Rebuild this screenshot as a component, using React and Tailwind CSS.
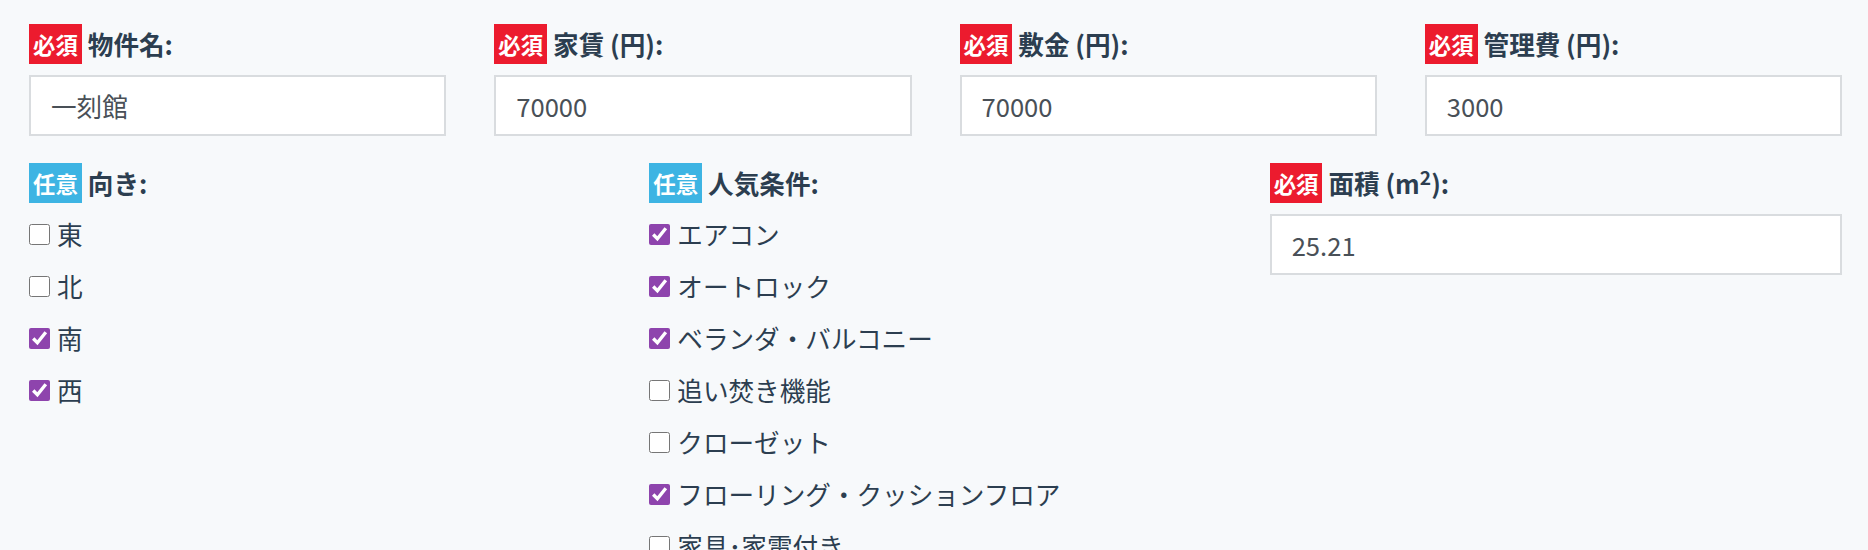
import { useState } from "react";

const Badge = ({ required }) => (
  <span
    className={
      "inline-flex h-[40px] items-center px-[4px] text-[22.4px] font-bold leading-none text-white " +
      (required ? "bg-[#ec1b2e]" : "bg-[#3db4e3]")
    }
  >
    {required ? "必須" : "任意"}
  </span>
);

const FieldLabel = ({ required, children }) => (
  <div className="flex items-center gap-[6px]">
    <Badge required={required} />
    <span className="text-[25.6px] font-bold leading-none text-[#2c3e50]">{children}</span>
  </div>
);

const TextField = ({ label, value, required = true }) => (
  <div>
    <FieldLabel required={required}>{label}</FieldLabel>
    <input
      type="text"
      defaultValue={value}
      className="mt-[11px] h-[61px] w-full border-2 border-[#d9dcdf] bg-white px-[20px] text-[25.6px] text-[#495057] outline-none"
    />
  </div>
);

const CheckList = ({ items }) => {
  const [checked, setChecked] = useState(items.map((i) => i.on));

  const toggle = (idx) => {
    setChecked(checked.map((c, i) => (i === idx ? !c : c)));
  };

  return (
    <div className="mt-[5px]">
      {items.map((item, idx) => (
        <label key={item.name} className="flex h-[52px] items-center gap-[7px]">
          <input
            type="checkbox"
            checked={checked[idx]}
            onChange={() => toggle(idx)}
            className="m-0 h-[21px] w-[21px] accent-[#8e44ad]"
          />
          <span className="text-[25.6px] leading-none text-[#2c3e50]">{item.name}</span>
        </label>
      ))}
    </div>
  );
};

const directions = [
  { name: "東", on: false },
  { name: "北", on: false },
  { name: "南", on: true },
  { name: "西", on: true },
];

const features = [
  { name: "エアコン", on: true },
  { name: "オートロック", on: true },
  { name: "ベランダ・バルコニー", on: true },
  { name: "追い焚き機能", on: false },
  { name: "クローゼット", on: false },
  { name: "フローリング・クッションフロア", on: true },
  { name: "家具･家電付き", on: false },
  { name: "バス・トイレ別", on: false },
];

export default function App() {
  return (
    <div
      className="min-h-screen bg-[#f7f9fb] pl-[29px] pr-[26px] pt-[24px]"
      style={{ fontFamily: '"Noto Sans CJK JP", "Noto Sans", sans-serif' }}
    >
      {/* 基本情報 */}
      <div className="grid grid-cols-4 gap-x-[48px]">
        <TextField label="物件名:" value="一刻館" />
        <TextField label="家賃 (円):" value="70000" />
        <TextField label="敷金 (円):" value="70000" />
        <TextField label="管理費 (円):" value="3000" />
      </div>

      {/* 条件 */}
      <div className="mt-[27px] grid grid-cols-3 gap-x-[48px]">
        <div>
          <FieldLabel required={false}>向き:</FieldLabel>
          <CheckList items={directions} />
        </div>
        <div>
          <FieldLabel required={false}>人気条件:</FieldLabel>
          <CheckList items={features} />
        </div>
        <TextField
          label={
            <>
              面積 (m<sup>2</sup>):
            </>
          }
          value="25.21"
        />
      </div>
    </div>
  );
}
